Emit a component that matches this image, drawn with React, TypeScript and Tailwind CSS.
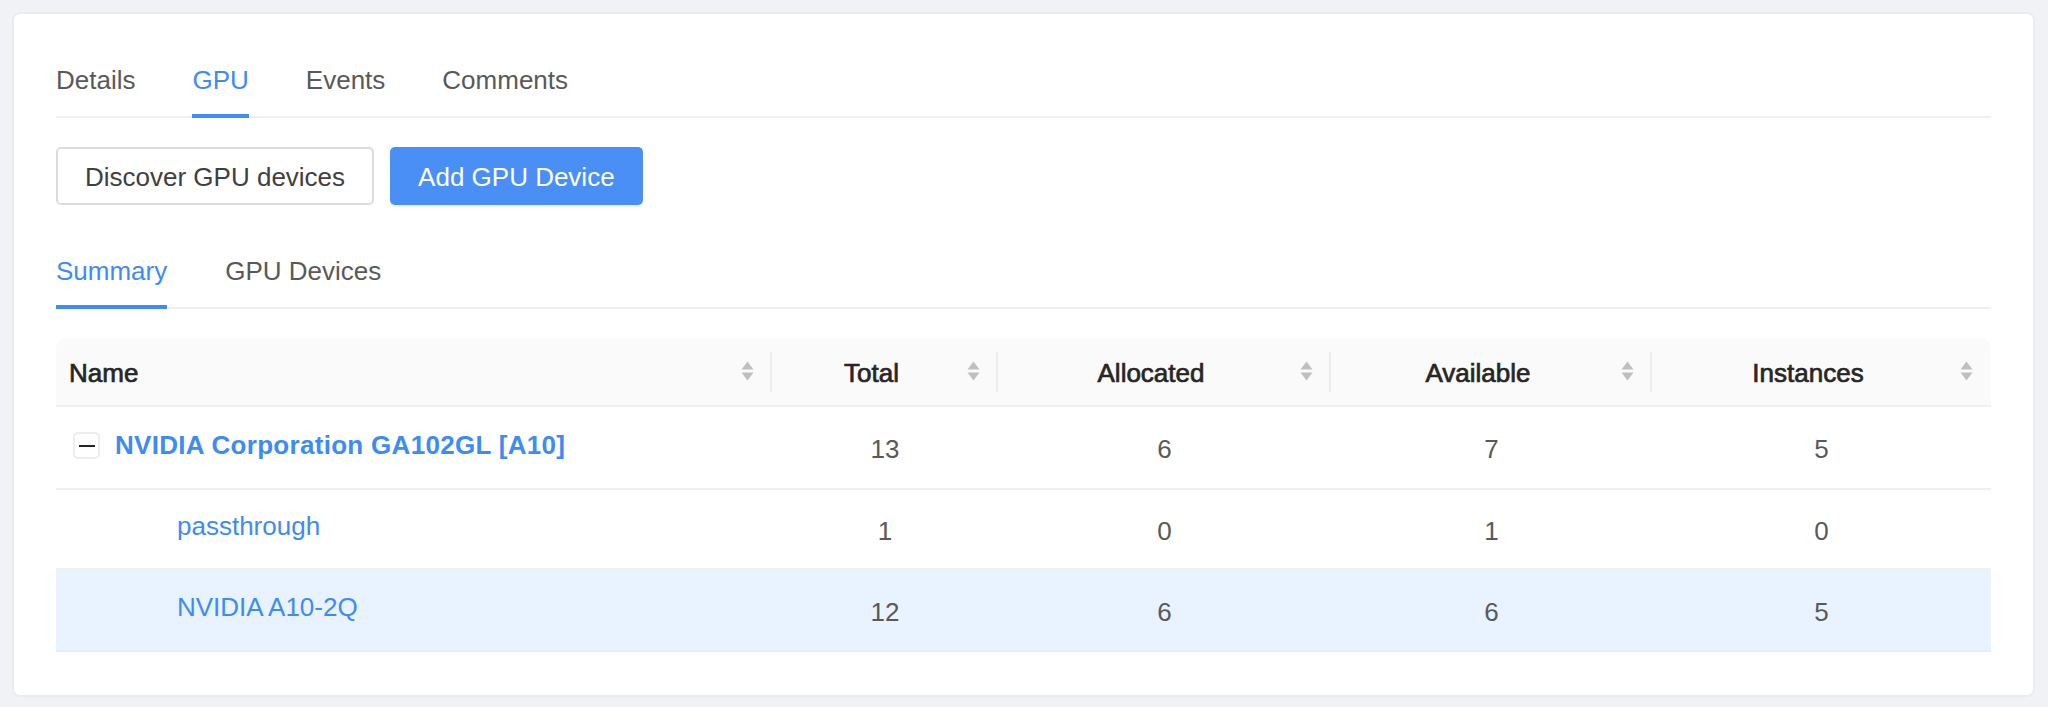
import React from "react";

const FONT = { fontFamily: '"Liberation Sans", Arial, sans-serif' };

function SortIcon() {
  return (
    <svg width="13" height="21" viewBox="0 0 13 21" className="shrink-0">
      <polygon points="6.5,0.5 12.5,8.5 0.5,8.5" fill="#bfbfbf" />
      <polygon points="0.5,11.5 12.5,11.5 6.5,19.5" fill="#bfbfbf" />
    </svg>
  );
}

function HeaderCell({ title, align, last }: { title: string; align: "left" | "center"; last?: boolean }) {
  return (
    <div className="flex h-full items-center pl-[13px]">
      <div
        className={
          "flex-1 pt-[4px] text-[#262626] [-webkit-text-stroke:0.7px_#262626] " +
          (align === "left" ? "text-left" : "text-center")
        }
      >
        {title}
      </div>
      <div className="ml-[9px]">
        <SortIcon />
      </div>
      {last ? (
        <div className="w-[18px]" />
      ) : (
        <>
          <div className="w-[16px]" />
          <div className="h-[40px] w-[2px] bg-[#ececec]" />
        </>
      )}
    </div>
  );
}

type Row = {
  name: string;
  parent?: boolean;
  total: number;
  allocated: number;
  available: number;
  instances: number;
  h: string;
  highlight?: boolean;
};

const rows: Row[] = [
  { name: "NVIDIA Corporation GA102GL [A10]", parent: true, total: 13, allocated: 6, available: 7, instances: 5, h: "h-[83px]" },
  { name: "passthrough", total: 1, allocated: 0, available: 1, instances: 0, h: "h-[80px]" },
  { name: "NVIDIA A10-2Q", total: 12, allocated: 6, available: 6, instances: 5, h: "h-[82px]", highlight: true },
];

export default function App() {
  return (
    <div className="h-[707px] bg-[#f0f2f5] pt-[12px] pl-[12px] pr-[13px] text-[26px]" style={FONT}>
      <div className="h-[685px] rounded-[8px] border-2 border-[#eaecef] bg-white px-[42px] pt-[46px]">
        {/* Top tabs */}
        <div className="flex gap-[57px] border-b-2 border-[#f0f0f0]">
          {["Details", "GPU", "Events", "Comments"].map((t) => (
            <div
              key={t}
              className={
                "relative pt-[2px] pb-[18px] leading-[36px] " +
                (t === "GPU" ? "text-[#3d8bf5]" : "text-[#595959]")
              }
            >
              {t}
              {t === "GPU" && <div className="absolute bottom-[-2px] left-0 right-0 h-[4px] bg-[#3d8bf5]" />}
            </div>
          ))}
        </div>

        {/* Buttons */}
        <div className="mt-[29px] flex gap-[16px]">
          <button className="flex h-[58px] items-center rounded-[5px] border-2 border-[#dcdcdc] bg-white px-[27px] pt-[3px] text-[#404040]">
            Discover GPU devices
          </button>
          <button className="flex h-[58px] items-center rounded-[5px] bg-[#4a8ff6] px-[28px] pt-[3px] text-white shadow-[0_2px_0_rgba(5,145,255,0.1)]">
            Add GPU Device
          </button>
        </div>

        {/* Sub tabs */}
        <div className="mt-[46px] flex gap-[58px] border-b-2 border-[#f0f0f0]">
          {["Summary", "GPU Devices"].map((t) => (
            <div
              key={t}
              className={
                "relative pt-[2px] pb-[18px] leading-[36px] " +
                (t === "Summary" ? "text-[#3d8bf5]" : "text-[#595959]")
              }
            >
              {t}
              {t === "Summary" && <div className="absolute bottom-[-2px] left-0 right-0 h-[4px] bg-[#3d8bf5]" />}
            </div>
          ))}
        </div>

        {/* Table */}
        <div className="mt-[29px]">
          <div className="grid h-[69px] grid-cols-[716px_226px_333px_321px_339px] rounded-t-[10px] border-b-2 border-[#f0f0f0] bg-[#fafafa]">
            <HeaderCell title="Name" align="left" />
            <HeaderCell title="Total" align="center" />
            <HeaderCell title="Allocated" align="center" />
            <HeaderCell title="Available" align="center" />
            <HeaderCell title="Instances" align="center" last />
          </div>
          {rows.map((r) => (
            <div
              key={r.name}
              className={
                "grid grid-cols-[716px_226px_333px_321px_339px] border-b-2 " +
                r.h +
                " " +
                (r.highlight ? "border-[#e3eefb] bg-[#e8f3ff]" : "border-[#f0f0f0] bg-white")
              }
            >
              {r.parent ? (
                <div className="flex items-center pb-[4px] pl-[17px]">
                  <div className="flex h-[27px] w-[27px] items-center justify-center rounded-[5px] border-2 border-[#ededed] bg-white">
                    <div className="h-[2px] w-[16px] bg-[#262626]" />
                  </div>
                  <span className="ml-[15px] font-bold tracking-[0.3px] text-[#3d8bf5]">{r.name}</span>
                </div>
              ) : (
                <div className="flex items-center pb-[6px] pl-[121px] text-[#3d8bf5]">{r.name}</div>
              )}
              {[r.total, r.allocated, r.available, r.instances].map((v, i) => (
                <div key={i} className="flex items-center justify-center pt-[4px] text-[#595959]">
                  {v}
                </div>
              ))}
            </div>
          ))}
        </div>
      </div>
    </div>
  );
}
